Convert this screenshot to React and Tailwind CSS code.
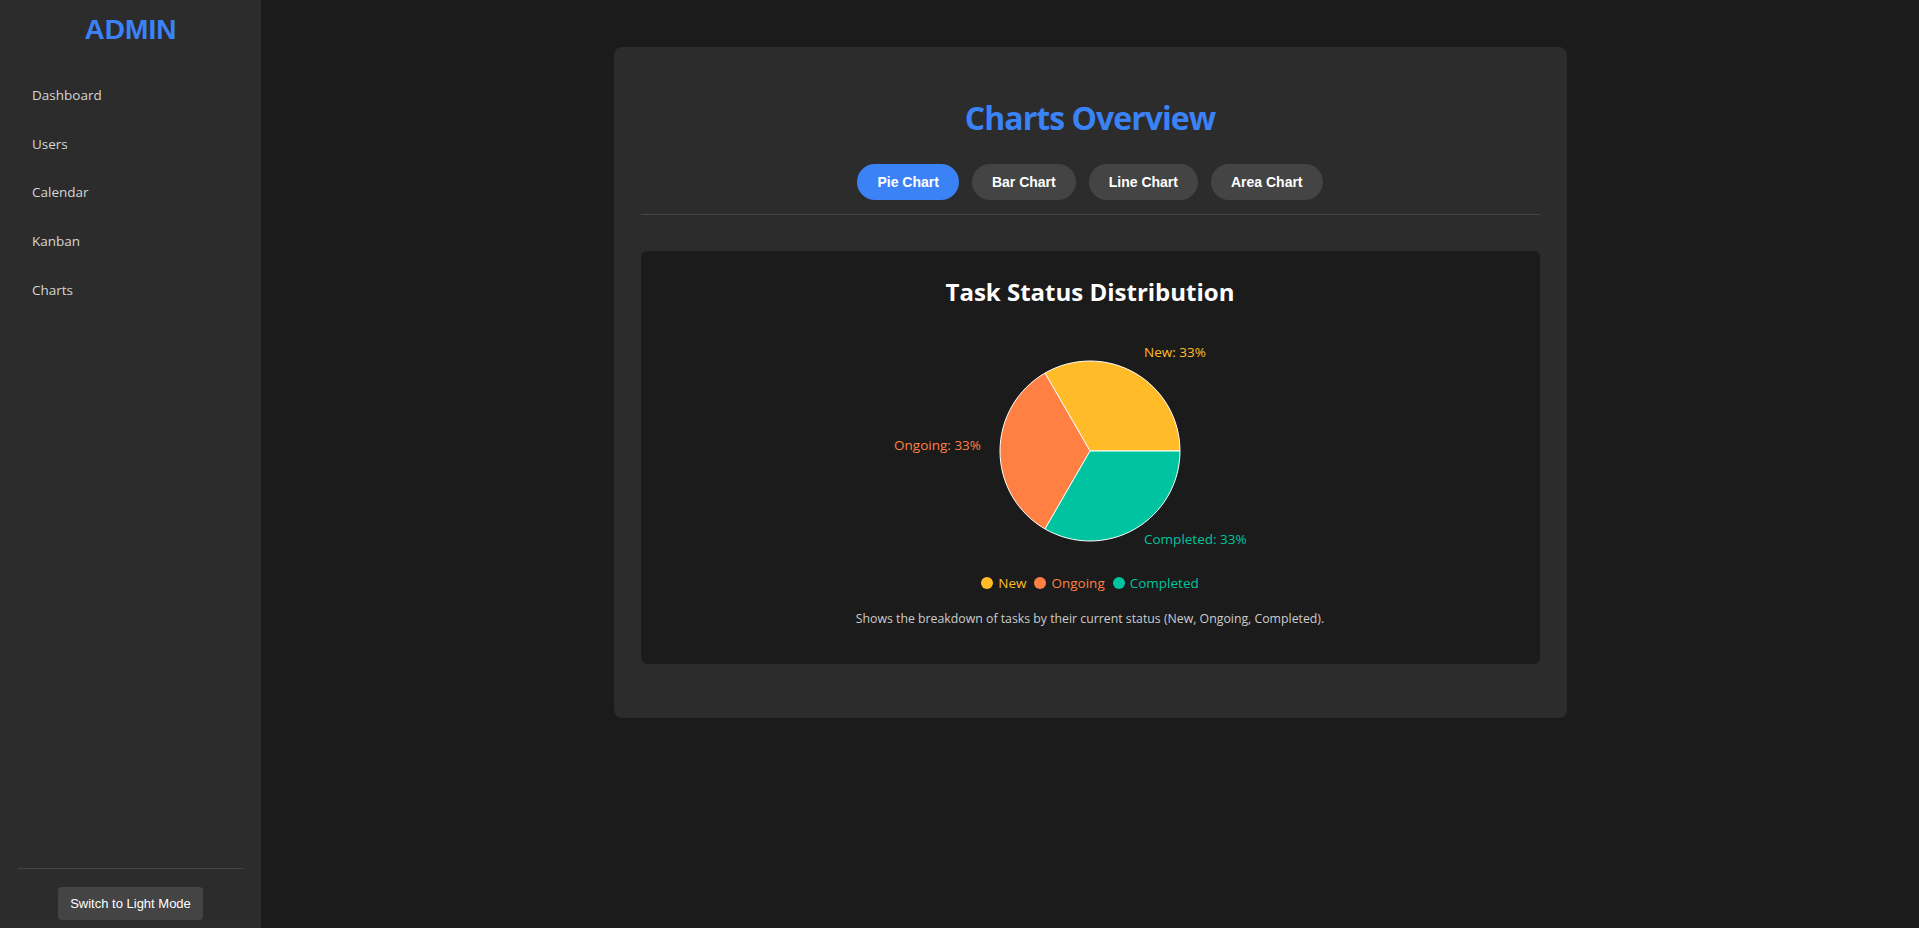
import { useState } from "react";

const navItems = ["Dashboard", "Users", "Calendar", "Kanban", "Charts"];
const tabs = ["Pie Chart", "Bar Chart", "Line Chart", "Area Chart"];

const slices = [
  { name: "New", color: "#FFBB28", d: "M200,140 L290,140 A90,90 0 0 0 155,62.06 Z" },
  { name: "Ongoing", color: "#FF8042", d: "M200,140 L155,62.06 A90,90 0 0 0 155,217.94 Z" },
  { name: "Completed", color: "#00C49F", d: "M200,140 L155,217.94 A90,90 0 0 0 290,140 Z" },
];

function PieChart() {
  return (
    <svg width="400" height="250" viewBox="0 0 400 250" className="mx-auto mt-[3px] block">
      {slices.map((s) => (
        <path key={s.name} d={s.d} fill={s.color} stroke="#fff" strokeWidth="1" />
      ))}
      <g fontSize="13.5" dominantBaseline="central">
        <text x="254" y="41" fill="#FFBB28">New: 33%</text>
        <text x="91" y="134" fill="#FF8042" textAnchor="end">Ongoing: 33%</text>
        <text x="254" y="228" fill="#00C49F">Completed: 33%</text>
      </g>
    </svg>
  );
}

export default function App() {
  const [active, setActive] = useState("Pie Chart");

  return (
    <div className="flex h-screen w-full bg-[#1b1b1b] font-['Segoe_UI','Open_Sans',sans-serif] text-[#ddd]">
      {/* Sidebar */}
      <aside className="flex w-[261px] shrink-0 flex-col bg-[#2c2c2c]">
        <h2 className="pt-[14px] text-center font-['Liberation_Sans',Arial,sans-serif] text-[28px] leading-[32px] font-bold text-[#3b82f6]">
          ADMIN
        </h2>
        <ul className="mt-[25px]">
          {navItems.map((item) => (
            <li key={item} className="flex h-[48.6px] items-center pl-8 text-[13.5px] text-[#d6d6d6]">
              {item}
            </li>
          ))}
        </ul>
        <div className="mt-auto px-[18px] pb-2">
          <div className="border-t border-[#444]" />
          <div className="mt-[18px] flex justify-center">
            <button className="h-[33px] rounded bg-[#444] px-3 font-['Liberation_Sans',Arial,sans-serif] text-[13px] text-white">
              Switch to Light Mode
            </button>
          </div>
        </div>
      </aside>

      {/* Main */}
      <main className="flex-1 overflow-auto">
        <div className="mx-auto mt-[47px] w-[953px] rounded-lg bg-[#2c2c2c] px-[27px] pt-[51px] pb-[54px]">
          <h1 className="text-center text-[32px] leading-[40px] font-bold tracking-[-0.03em] text-[#3b82f6]">
            Charts Overview
          </h1>

          <div className="mt-[26px] flex justify-center gap-[13px]">
            {tabs.map((t) => (
              <button
                key={t}
                onClick={() => setActive(t)}
                className={
                  "h-9 rounded-full px-[20px] font-['Liberation_Sans',Arial,sans-serif] text-[14px] font-bold text-white " +
                  (active === t ? "bg-[#3b82f6]" : "bg-[#444]")
                }
              >
                {t}
              </button>
            ))}
          </div>

          <div className="mt-[14px] border-t border-[#444]" />

          <div className="mt-[36px] rounded-md bg-[#1b1b1b] pt-[25px] pb-[36px]">
            <h3 className="text-center text-[24px] leading-[32px] font-bold text-white">Task Status Distribution</h3>
            <PieChart />
            <div className="mt-[12px] flex h-5 items-center justify-center gap-[8px] text-[13.5px]">
              {slices.map((s) => (
                <div key={s.name} className="flex items-center gap-[5px]" style={{ color: s.color }}>
                  <span className="h-3 w-3 rounded-full" style={{ backgroundColor: s.color }} />
                  {s.name}
                </div>
              ))}
            </div>
            <p className="mt-[17px] text-center text-[12.3px] leading-[18px] text-[#ccc]">
              Shows the breakdown of tasks by their current status (New, Ongoing, Completed).
            </p>
          </div>
        </div>
      </main>
    </div>
  );
}
